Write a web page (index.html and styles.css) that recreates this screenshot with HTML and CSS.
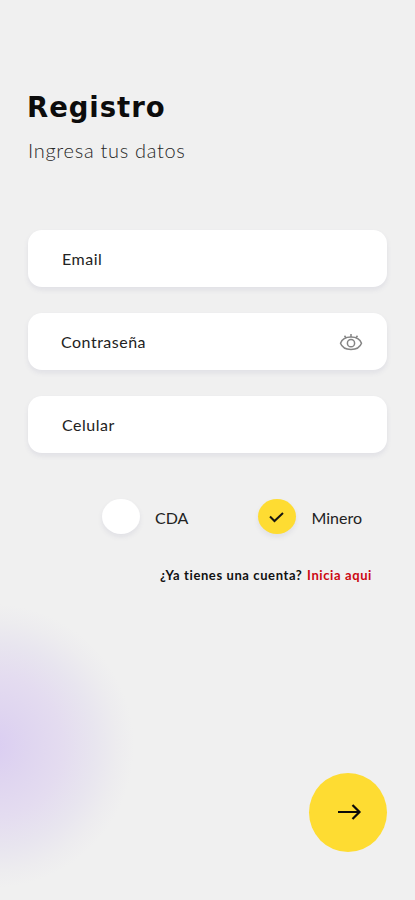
FILE: index.html
```html
<!DOCTYPE html>
<html lang="es">
<head>
<meta charset="utf-8">
<meta name="viewport" content="width=device-width">
<title>Registro</title>
<link rel="stylesheet" href="styles.css">
</head>
<body>
<main class="screen">
  <header class="heading">
    <h1 class="title">Registro</h1>
    <p class="subtitle">Ingresa tus datos</p>
  </header>
  <form class="form">
    <div class="field"><label class="email">Email</label></div>
    <div class="field"><label class="password">Contraseña</label>
      <svg class="eye" width="24" height="20" viewBox="0 0 24 20" fill="none" stroke="#858585" stroke-width="1.5"><path d="M1.500 11.200C3 7 7 5 12 5s9 2 10.500 6.200C21 15.400 17 17.400 12 17.400S3 15.400 1.500 11.200Z"/><circle cx="12" cy="11.200" r="3.600"/><path d="M12 5V2M7.200 6L5.500 3.700M16.800 6l1.700-2.300"/></svg>
    </div>
    <div class="field"><label class="phone">Celular</label></div>
    <div class="roles">
      <div class="role"><span class="radio"></span><span class="cda">CDA</span></div>
      <div class="role"><span class="radio checked"><svg width="16" height="12" viewBox="0 0 16 12" fill="none" stroke="#171711" stroke-width="2"><path d="M1 5.500L5.500 10l8.500-8"/></svg></span><span class="minero">Minero</span></div>
    </div>
    <p class="login"><span class="question">¿Ya tienes una cuenta?</span><a class="link">Inicia aqui</a></p>
  </form>
  <button class="next" type="button" aria-label="Continuar"><svg width="26" height="20" viewBox="0 0 26 20" fill="none" stroke="#0b0b09" stroke-width="2.200"><path d="M2 10h21M16.500 3l7 7-7 7"/></svg></button>
</main>
</body>
</html>
```
FILE: styles.css
```css
* { box-sizing: border-box; }
body { margin: 0; }
.screen {
  display: flex;
  flex-direction: column;
  height: 900px;
  padding: 88px 28px 48px;
  overflow: hidden;
  color: #222;
  font-family: Lato, "Open Sans", sans-serif;
  background: radial-gradient(ellipse 142px 142px at -8px 746px, #dacdf2 0%, #dfd5f0 25%, #e4dcf0 50%, #e8e5ef 72%, #edecef 88%, #f0f0f0 100%) #f0f0f0;
}
.heading { height: 142px; }
.title {
  margin: 0 0 0 -1px;
  color: #0c0c0c;
  font: 700 27.5px/38px "DejaVu Sans", sans-serif;
  letter-spacing: .950px;
}
.subtitle {
  margin: 9px 0 0;
  color: #262626;
  font-size: 20px;
  font-weight: 300;
  line-height: 30px;
  letter-spacing: .7px;
  white-space: nowrap;
}
.form { display: flex; flex-direction: column; gap: 26px; }
.field {
  display: flex;
  align-items: center;
  justify-content: space-between;
  width: 359px;
  height: 57px;
  padding: 0 24px 0 34px;
  border-radius: 14px;
  background: #fff;
  box-shadow: 0 3px 5px rgba(90, 90, 140, .1);
  font-size: 16px;
  letter-spacing: .5px;
}
.password { margin-left: -1px; }
.roles {
  display: flex;
  justify-content: space-between;
  width: 260px;
  height: 35px;
  margin: 20px 0 0 74px;
  font-size: 16px;
}
.role { display: flex; align-items: center; gap: 15px; }
.role > span:last-child { padding-top: 2px; }
.radio {
  display: flex;
  align-items: center;
  justify-content: center;
  width: 38px;
  height: 35px;
  border-radius: 50%;
  background: #fff;
  box-shadow: 0 3px 5px rgba(90, 90, 140, .1);
}
.checked { background: #fedc32; }
.login {
  display: flex;
  align-items: center;
  justify-content: space-between;
  width: 212px;
  height: 20px;
  margin: 5px 0 0 132px;
  color: #111;
  font-size: 13px;
  font-weight: 700;
  letter-spacing: .6px;
  white-space: nowrap;
}
.link { color: #cc0712; }
.next {
  display: flex;
  align-items: center;
  justify-content: center;
  width: 78px;
  height: 79px;
  margin: auto 0 0 281px;
  padding: 0 0 2px 1px;
  border: 0;
  border-radius: 50%;
  background: #fedc32;
}
```
